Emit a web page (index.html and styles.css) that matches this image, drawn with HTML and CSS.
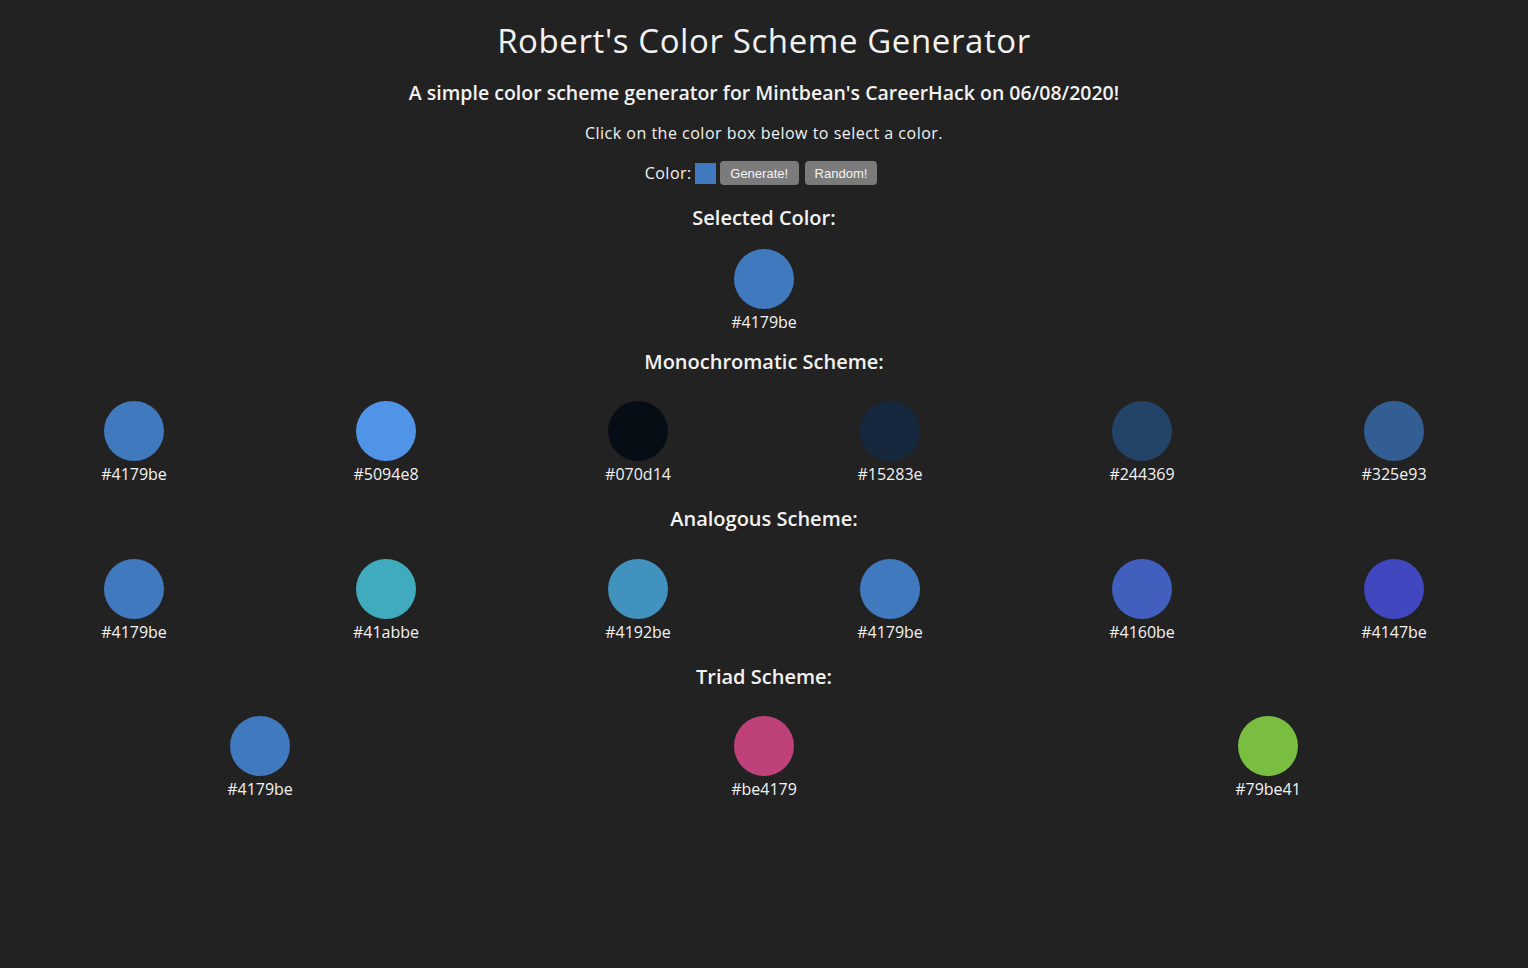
FILE: index.html
```html
<!DOCTYPE html>
<html lang="en">
<head>
<meta charset="utf-8">
<title>Robert's Color Scheme Generator</title>
<link rel="stylesheet" href="styles.css">
</head>
<body>
<header class="intro">
  <h1 class="title">Robert's Color Scheme Generator</h1>
  <h3 class="subtitle">A simple color scheme generator for Mintbean's CareerHack on 06/08/2020!</h3>
  <p class="hint">Click on the color box below to select a color.</p>
  <div class="controls">
    <label class="color-label" for="picker">Color:</label>
    <input class="picker" id="picker" type="color" value="#4179be">
    <button class="btn btn-generate">Generate!</button>
    <button class="btn">Random!</button>
  </div>
</header>

<section class="block block-selected">
  <h3 class="heading">Selected Color:</h3>
  <div class="row">
    <div class="swatch"><div class="dot" style="background:#4179be"></div><span class="hex">#4179be</span></div>
  </div>
</section>

<section class="block block-mono">
  <h3 class="heading">Monochromatic Scheme:</h3>
  <div class="row">
    <div class="swatch"><div class="dot" style="background:#4179be"></div><span class="hex">#4179be</span></div>
    <div class="swatch"><div class="dot" style="background:#5094e8"></div><span class="hex">#5094e8</span></div>
    <div class="swatch"><div class="dot" style="background:#070d14"></div><span class="hex">#070d14</span></div>
    <div class="swatch"><div class="dot" style="background:#15283e"></div><span class="hex">#15283e</span></div>
    <div class="swatch"><div class="dot" style="background:#244369"></div><span class="hex">#244369</span></div>
    <div class="swatch"><div class="dot" style="background:#325e93"></div><span class="hex">#325e93</span></div>
  </div>
</section>

<section class="block block-analogous">
  <h3 class="heading">Analogous Scheme:</h3>
  <div class="row">
    <div class="swatch"><div class="dot" style="background:#4179be"></div><span class="hex">#4179be</span></div>
    <div class="swatch"><div class="dot" style="background:#41abbe"></div><span class="hex">#41abbe</span></div>
    <div class="swatch"><div class="dot" style="background:#4192be"></div><span class="hex">#4192be</span></div>
    <div class="swatch"><div class="dot" style="background:#4179be"></div><span class="hex">#4179be</span></div>
    <div class="swatch"><div class="dot" style="background:#4160be"></div><span class="hex">#4160be</span></div>
    <div class="swatch"><div class="dot" style="background:#4147be"></div><span class="hex">#4147be</span></div>
  </div>
</section>

<section class="block">
  <h3 class="heading">Triad Scheme:</h3>
  <div class="row">
    <div class="swatch"><div class="dot" style="background:#4179be"></div><span class="hex">#4179be</span></div>
    <div class="swatch"><div class="dot" style="background:#be4179"></div><span class="hex">#be4179</span></div>
    <div class="swatch"><div class="dot" style="background:#79be41"></div><span class="hex">#79be41</span></div>
  </div>
</section>
</body>
</html>
```
FILE: styles.css
```css
html {
  background: #222222;
}
body {
  margin: 8px;
  background: #222222;
  color: #f2f2f2;
  font-family: "Open Sans", "DejaVu Sans", sans-serif;
  text-align: center;
}
.intro {
  display: flex;
  flex-direction: column;
  align-items: center;
}
.title {
  margin: 13px 0 0;
  font-size: 33px;
  line-height: 40px;
  font-weight: 500;
  letter-spacing: 0.6px;
}
.subtitle {
  margin: 20px 0 0;
  font-size: 19.5px;
  line-height: 24px;
  font-weight: 600;
}
.hint {
  margin: 18px 0 0;
  font-size: 16px;
  line-height: 20px;
  letter-spacing: 0.5px;
}
.controls {
  margin-top: 18px;
  display: flex;
  align-items: center;
  justify-content: center;
  height: 24px;
  font-size: 16px;
}
.color-label {
  margin-right: 3px;
  letter-spacing: 0.5px;
}
.picker {
  -webkit-appearance: none;
  appearance: none;
  width: 21px;
  height: 21px;
  padding: 0;
  border: none;
  background: none;
  margin: 0 4px 0 0;
}
.picker::-webkit-color-swatch-wrapper {
  padding: 0;
}
.picker::-webkit-color-swatch {
  border: none;
  border-radius: 0;
}
.btn {
  height: 24px;
  padding: 0 10px;
  margin: 0 6px 0 0;
  border: none;
  border-radius: 4px;
  background: #7b7b7b;
  color: #f4f4f4;
  font-family: "Liberation Sans", Arial, sans-serif;
  font-size: 13px;
}
.btn-generate {
  padding: 0 10.5px;
}
.block {
  margin-top: 23px;
}
.block-selected {
  margin-top: 21px;
}
.block-mono {
  margin-top: 18px;
}
.heading {
  margin: 0;
  font-size: 20px;
  line-height: 24px;
  font-weight: 600;
}
.row {
  display: flex;
  justify-content: space-around;
  margin-top: 27px;
}
.block-selected .row {
  margin-top: 19px;
}
.block-analogous .row {
  margin-top: 28px;
}
.swatch {
  flex: 1 1 0;
  display: flex;
  flex-direction: column;
  align-items: center;
}
.dot {
  width: 60px;
  height: 60px;
  border-radius: 50%;
}
.hex {
  margin-top: 3px;
  font-size: 16px;
  line-height: 20px;
}
```
